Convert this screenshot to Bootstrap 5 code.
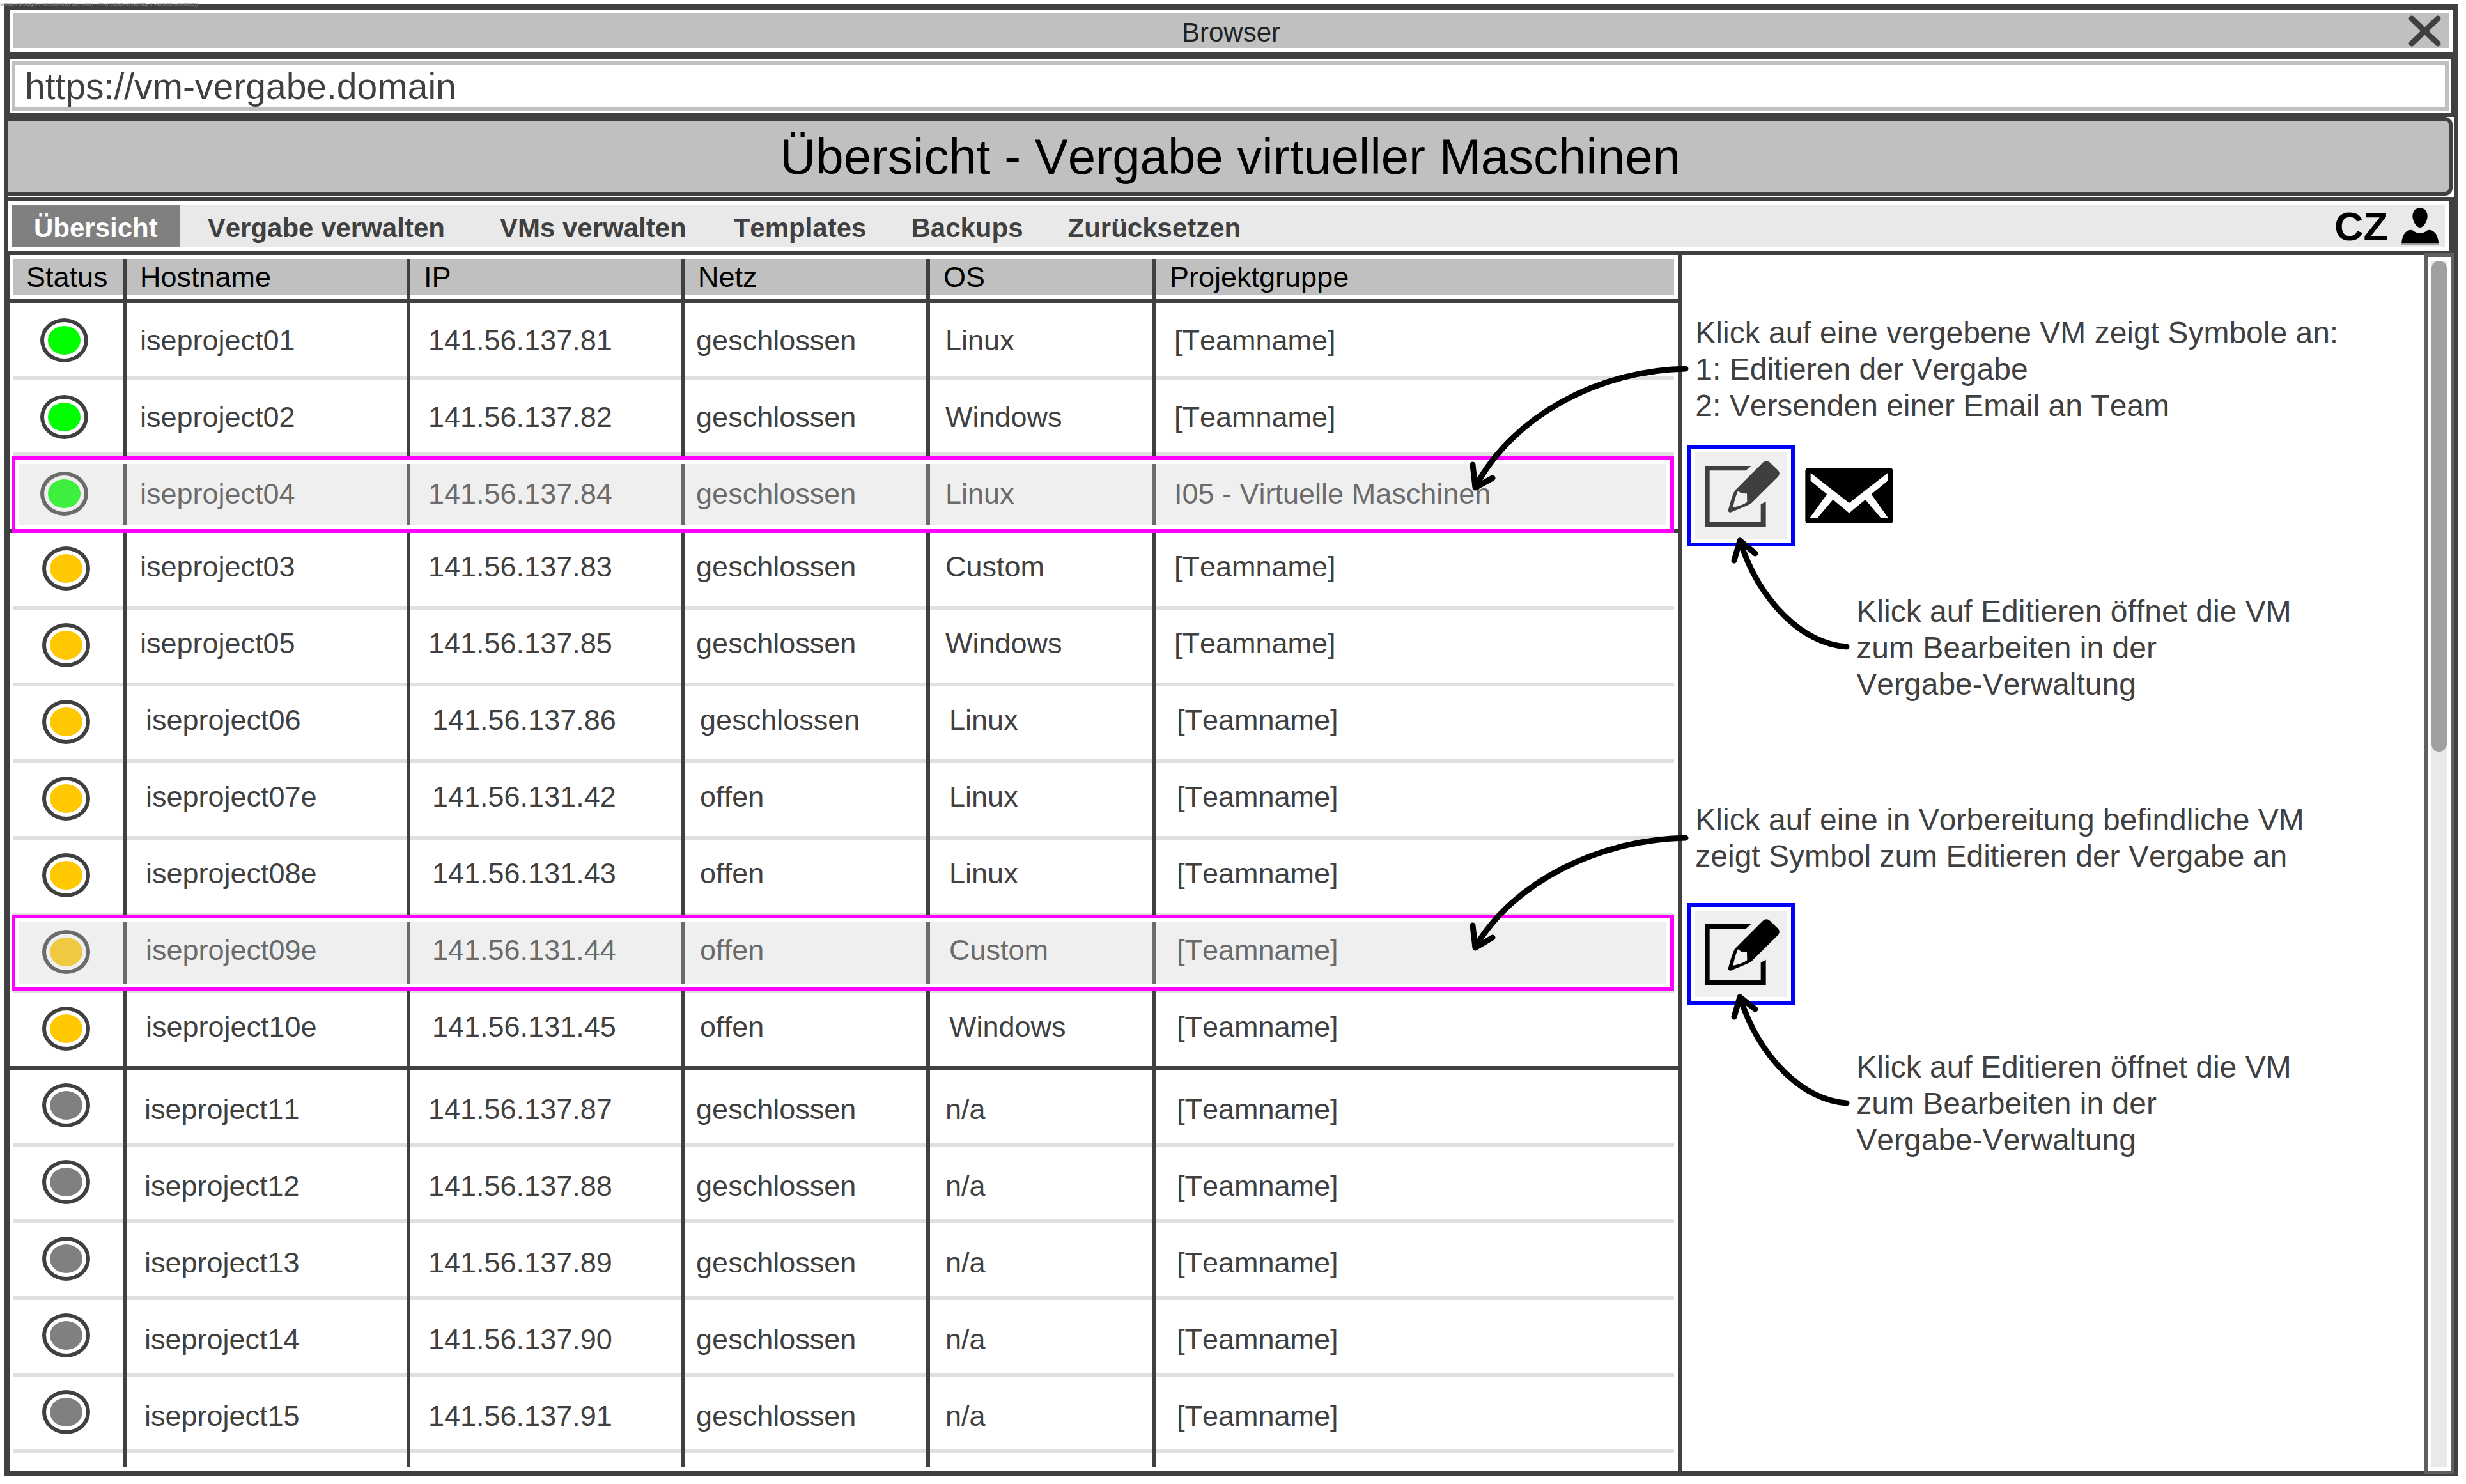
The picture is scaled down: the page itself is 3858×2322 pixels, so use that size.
<!DOCTYPE html>
<html lang="de">
<head>
<meta charset="utf-8">
<meta name="viewport" content="width=device-width, initial-scale=1">
<title>Übersicht - Vergabe virtueller Maschinen</title>
<link href="https://cdn.jsdelivr.net/npm/bootstrap@5.3.0/dist/css/bootstrap.min.css" rel="stylesheet">
<style>
:root { --ink: #404040; --bar: #c0c0c0; --pale: #e9e9e9; --line: #dfdfdf; }
body { font-family: "Liberation Sans", Arial, sans-serif; font-kerning: none; font-size: 45px; line-height: 54px; color: var(--ink); background: #fff; padding: 6px 12px 12px 6px; }
.watermark { position: absolute; left: 0; top: 2px; font-size: 8px; line-height: 10px; color: #858585; white-space: nowrap; }
.window { border: 6px solid var(--ink); }

/* window title */
.titlebar { border: 3px solid var(--ink); border-bottom-width: 6px; padding: 6px; }
.titlebar-inner { background: var(--bar); height: 54px; font-size: 42px; line-height: 48px; padding-top: 6px; color: #222; }
.close-btn { right: 12px; top: 0; width: 51px; height: 54px; line-height: 0; }

/* address */
.address { border: 6px solid var(--ink); border-width: 6px 6px 6px 3px; padding: 3px; }
.address .form-control { border: 6px solid var(--bar); border-radius: 0; height: 78px; padding: 0 15px; font-size: 57px; line-height: 66px; color: var(--ink); background: #fff; }

/* page header */
.masthead { background: var(--bar); border: 6px solid var(--ink); border-left-width: 0; border-radius: 0 12px 12px 0; margin-right: 3px; margin-bottom: 3px; padding-left: 6px; height: 123px; }
.masthead h1 { font-size: 78px; line-height: 113px; color: #000; margin: 0; }

/* navigation */
.topnav { border: 6px solid var(--ink); border-width: 6px 9px 6px 0; padding: 6px; }
.topnav-inner { background: var(--pale); height: 66px; padding-right: 9px; }
.topnav .nav-link { font-size: 42px; line-height: 61px; padding: 5px 35px 0; font-weight: bold; color: var(--ink); border-radius: 0; }
.topnav .nav-link.active { background: #808080; color: #fff; }
.user-btn { font-size: 63px; line-height: 66px; font-weight: bold; color: #000; gap: 20px; }

/* content */
.content { border: 3px solid var(--ink); border-width: 0 0 3px 3px; }
.list-pane { flex: 0 0 68.4%; min-width: 0; padding-bottom: 6px; position: relative; border-right: 6px solid var(--ink); }
.notes-pane { flex: 1 1 0; min-width: 0; padding: 93px 0 0 21px; position: relative; font-size: 48px; line-height: 57px; }

.vm-table { width: 100%; table-layout: fixed; border-collapse: separate; border-spacing: 0; }
.vm-table th { height: 75px; padding: 8px 0 13px 27px; font-weight: normal; color: #000; vertical-align: top;
  background:
    linear-gradient(var(--ink), var(--ink)) 0 100% / 100% 6px no-repeat,
    linear-gradient(var(--ink), var(--ink)) 0 6px / 6px 100% no-repeat,
    linear-gradient(var(--bar), var(--bar)) 0 6px / 100% 57px no-repeat; }
.vm-table th:first-child { padding-left: 26px;
  background:
    linear-gradient(var(--ink), var(--ink)) 0 100% / 100% 6px no-repeat,
    linear-gradient(var(--bar), var(--bar)) 6px 6px / 100% 57px no-repeat; }
.vm-table th:last-child {
  background:
    linear-gradient(var(--ink), var(--ink)) 0 100% / 100% 6px no-repeat,
    linear-gradient(var(--ink), var(--ink)) 0 6px / 6px 100% no-repeat,
    linear-gradient(90deg, var(--bar) calc(100% - 6px), #fff 0) 0 6px / 100% 57px no-repeat; }
.vm-table td { height: 120px; padding: 32px 0 0 21px; vertical-align: top; white-space: nowrap; border-left: 6px solid var(--ink);
  background: linear-gradient(var(--line), var(--line)) 0 100% / 100% 6px no-repeat; }
.vm-table td:first-child { border-left: 0; padding: 24px 0 0 48px; background-position: 6px 100%; }
.vm-table td:last-child { background: linear-gradient(90deg, var(--line) calc(100% - 6px), #fff 0) 0 100% / 100% 6px no-repeat; }
.vm-table td:nth-child(3) { padding-left: 28px; }
.vm-table td:nth-child(4) { padding-left: 18px; }
.vm-table td:nth-child(5) { padding-left: 24px; }
.vm-table td:nth-child(6) { padding-left: 28px; }
.vm-table .tier-end td, .vm-table .tier-end td:first-child, .vm-table .tier-end td:last-child { background: linear-gradient(var(--ink), var(--ink)) 0 100% / 100% 6px no-repeat; }

.vm-table .compact td { padding-top: 26px; }
.vm-table .pending td { padding-top: 26px; padding-left: 30px; }
.vm-table .pending td:nth-child(3) { padding-left: 34px; }
.vm-table .pending td:nth-child(4) { padding-left: 24px; }
.vm-table .pending td:nth-child(5) { padding-left: 30px; }
.vm-table .pending td:nth-child(6) { padding-left: 32px; }
.vm-table .unused td { padding-top: 35px; }
.vm-table .unused td:nth-child(2) { padding-left: 28px; }
.vm-table .unused td:nth-child(6) { padding-left: 32px; }
.vm-table .compact td:first-child, .vm-table .pending td:first-child, .vm-table .unused td:first-child { padding: 21px 0 0 51px; }
.vm-table .tail td, .vm-table .tail td:first-child { height: 21px; padding: 0; background: none; }

.state { display: block; width: 75px; height: 69px; border: 6px solid var(--ink); padding: 6px; border-radius: 50%; background-clip: content-box; }
.state-on { background-color: #00ff00; }
.state-prep { background-color: #ffc800; }
.state-off { background-color: #808080; }

/* selected row: veil with frame */
.picked { position: relative; }
.picked td:first-child::after { content: ""; position: absolute; left: 3px; right: 6px; top: 0; bottom: 0; border: 6px solid #f0f; padding: 6px; box-shadow: inset 0 0 0 6px #fff; background: rgba(203, 203, 203, .31) content-box; }
.pending .picked td:first-child::after { top: -3px; bottom: 3px; }

/* notes */
.note-sub { margin-left: 252px; }
.action { width: 168px; height: 159px; border: 6px solid #00f; border-radius: 0; padding: 6px; background: #efefef content-box; color: #000; line-height: 0; margin-left: -12px; }
.action.muted { color: #3f3f3f; }
.action svg { width: 144px; height: 135px; }
.mail-btn { margin-left: 16px; line-height: 0; }
.gap-a { margin-top: 33px; }
.gap-b { margin-top: 73px; }
.gap-c { margin-top: 155px; }
.gap-d { margin-top: 45px; }
.gap-e { margin-top: 69px; }
.arrows { position: absolute; left: -331px; top: 0; width: 600px; height: 1400px; pointer-events: none; fill: none; stroke: #000; stroke-width: 9px; stroke-linecap: round; stroke-linejoin: round; }

/* scrollbar */
.scroll-rail { flex: 0 0 48px; position: relative; border: 6px solid #606060; padding: 6px; background: var(--pale) content-box; margin: -3px 0 -6px; box-shadow: inset 0 0 0 6px #fff; }
.scroll-thumb { height: 40.7%; background: #a0a0a0; border-radius: 12px; }
</style>
</head>
<body>
<svg class="d-none">
  <symbol id="icon-edit" viewBox="36 54 432 405">
    <path d="M298 117H81V403H368V284L344 298V381H104V139H274Z" fill="currentColor"/>
    <path d="M225 230L354 101Q371 87 387 101L426 139Q437 153 426 167L298 294Q285 302 203 335Q189 336 192 322Q212 245 225 230Z" fill="currentColor"/>
    <path d="M237 235L253 246L279 247L280 286Q262 302 214 312Q222 268 237 235Z" fill="#efefef"/>
  </symbol>
</svg>
<div class="window">
  <div class="titlebar">
    <div class="titlebar-inner position-relative text-center">Browser
      <button type="button" class="btn close-btn border-0 p-0 position-absolute" aria-label="Schließen">
        <svg width="51" height="54" viewBox="0 0 51 54" stroke="#404040" stroke-width="9" stroke-linecap="round"><path d="M5 8L46 47M46 8L5 47"/></svg>
      </button>
    </div>
  </div>
  <form class="address m-0">
    <input class="form-control" type="text" aria-label="Adresse" value="https://vm-vergabe.domain">
  </form>
  <header class="masthead text-center"><h1>Übersicht - Vergabe virtueller Maschinen</h1></header>
  <nav class="topnav">
    <div class="topnav-inner d-flex justify-content-between">
      <ul class="nav nav-pills flex-nowrap">
        <li class="nav-item me-2"><a class="nav-link active" aria-current="page" href="#">Übersicht</a></li>
        <li class="nav-item me-3"><a class="nav-link" href="#">Vergabe verwalten</a></li>
        <li class="nav-item me-1"><a class="nav-link" href="#">VMs verwalten</a></li>
        <li class="nav-item"><a class="nav-link" href="#">Templates</a></li>
        <li class="nav-item"><a class="nav-link" href="#">Backups</a></li>
        <li class="nav-item"><a class="nav-link" href="#">Zurücksetzen</a></li>
      </ul>
      <button type="button" class="btn user-btn border-0 p-0 d-flex align-items-center">CZ
        <svg width="60" height="60" viewBox="348 42 180 180" aria-hidden="true">
          <path d="M438 46C458 46 473 62 473 85C473 105 458 138 438 138C418 138 403 105 403 85C403 62 418 46 438 46Z"/>
          <path d="M351 213Q357 150 396 149Q405 149 411 157Q438 173 465 157Q471 149 480 149Q519 150 526 213Z"/>
          <path d="M348 213H528V222H348Z" fill="#999"/>
        </svg>
      </button>
    </div>
  </nav>
  <main class="content d-flex">
    <section class="list-pane">
      <table class="vm-table">
        <colgroup><col style="width:6.78%"><col style="width:17.01%"><col style="width:16.44%"><col style="width:14.71%"><col style="width:13.56%"><col></colgroup>
        <thead><tr><th scope="col">Status</th><th scope="col">Hostname</th><th scope="col">IP</th><th scope="col">Netz</th><th scope="col">OS</th><th scope="col">Projektgruppe</th></tr></thead>
        <tbody>
          <tr><td><span class="state state-on"></span></td><td>iseproject01</td><td>141.56.137.81</td><td>geschlossen</td><td>Linux</td><td>[Teamname]</td></tr>
          <tr><td><span class="state state-on"></span></td><td>iseproject02</td><td>141.56.137.82</td><td>geschlossen</td><td>Windows</td><td>[Teamname]</td></tr>
          <tr class="picked tier-end"><td><span class="state state-on"></span></td><td>iseproject04</td><td>141.56.137.84</td><td>geschlossen</td><td>Linux</td><td>I05 - Virtuelle Maschinen</td></tr>
        </tbody>
        <tbody class="compact">
          <tr><td><span class="state state-prep"></span></td><td>iseproject03</td><td>141.56.137.83</td><td>geschlossen</td><td>Custom</td><td>[Teamname]</td></tr>
          <tr><td><span class="state state-prep"></span></td><td>iseproject05</td><td>141.56.137.85</td><td>geschlossen</td><td>Windows</td><td>[Teamname]</td></tr>
        </tbody>
        <tbody class="pending">
          <tr><td><span class="state state-prep"></span></td><td>iseproject06</td><td>141.56.137.86</td><td>geschlossen</td><td>Linux</td><td>[Teamname]</td></tr>
          <tr><td><span class="state state-prep"></span></td><td>iseproject07e</td><td>141.56.131.42</td><td>offen</td><td>Linux</td><td>[Teamname]</td></tr>
          <tr><td><span class="state state-prep"></span></td><td>iseproject08e</td><td>141.56.131.43</td><td>offen</td><td>Linux</td><td>[Teamname]</td></tr>
          <tr class="picked"><td><span class="state state-prep"></span></td><td>iseproject09e</td><td>141.56.131.44</td><td>offen</td><td>Custom</td><td>[Teamname]</td></tr>
          <tr class="tier-end"><td><span class="state state-prep"></span></td><td>iseproject10e</td><td>141.56.131.45</td><td>offen</td><td>Windows</td><td>[Teamname]</td></tr>
        </tbody>
        <tbody class="unused">
          <tr><td><span class="state state-off"></span></td><td>iseproject11</td><td>141.56.137.87</td><td>geschlossen</td><td>n/a</td><td>[Teamname]</td></tr>
          <tr><td><span class="state state-off"></span></td><td>iseproject12</td><td>141.56.137.88</td><td>geschlossen</td><td>n/a</td><td>[Teamname]</td></tr>
          <tr><td><span class="state state-off"></span></td><td>iseproject13</td><td>141.56.137.89</td><td>geschlossen</td><td>n/a</td><td>[Teamname]</td></tr>
          <tr><td><span class="state state-off"></span></td><td>iseproject14</td><td>141.56.137.90</td><td>geschlossen</td><td>n/a</td><td>[Teamname]</td></tr>
          <tr><td><span class="state state-off"></span></td><td>iseproject15</td><td>141.56.137.91</td><td>geschlossen</td><td>n/a</td><td>[Teamname]</td></tr>
          <tr class="tail"><td></td><td></td><td></td><td></td><td></td><td></td></tr>
        </tbody>
      </table>
    </section>
    <aside class="notes-pane">
      <p class="m-0">Klick auf eine vergebene VM zeigt Symbole an:<br>1: Editieren der Vergabe<br>2: Versenden einer Email an Team</p>
      <div class="d-flex align-items-center gap-a">
        <button type="button" class="btn action muted" aria-label="Editieren"><svg><use href="#icon-edit"/></svg></button>
        <button type="button" class="btn mail-btn border-0 p-0" aria-label="Email senden">
          <svg width="138" height="87" viewBox="549 119 414 261">
            <rect x="550" y="120" width="412" height="260" rx="14" fill="#000"/>
            <path d="M575 143L756 284L937 143V180L860 243L940 356H906L832 268L756 331L680 268L606 356H570L652 243L575 180Z" fill="#fff"/>
          </svg>
        </button>
      </div>
      <p class="note-sub mb-0 gap-b">Klick auf Editieren öffnet die VM<br>zum Bearbeiten in der<br>Vergabe-Verwaltung</p>
      <p class="mb-0 gap-c">Klick auf eine in Vorbereitung befindliche VM<br>zeigt Symbol zum Editieren der Vergabe an</p>
      <div class="d-flex gap-d">
        <button type="button" class="btn action" aria-label="Editieren"><svg><use href="#icon-edit"/></svg></button>
      </div>
      <p class="note-sub mb-0 gap-e">Klick auf Editieren öffnet die VM<br>zum Bearbeiten in der<br>Vergabe-Verwaltung</p>
      <svg class="arrows" viewBox="2300 399 600 1400" aria-hidden="true">
        <path d="M2637 577C2500 580 2368 650 2308 762M2304 727L2308 763L2335 748"/>
        <path d="M2637 1311C2500 1314 2368 1380 2308 1482M2304 1448L2308 1483L2335 1467"/>
        <path d="M2889 1012C2820 1008 2752 940 2722 846M2713 877L2722 846L2746 866"/>
        <path d="M2889 1726C2820 1722 2752 1654 2722 1560M2713 1591L2722 1560L2746 1579"/>
      </svg>
    </aside>
    <div class="scroll-rail"><div class="scroll-thumb"></div></div>
  </main>
</div>
<div class="watermark">Visual Paradigm Professional(Paul Kiok(HTW Dresden University of Applied Sciences))</div>
<script src="https://cdn.jsdelivr.net/npm/bootstrap@5.3.0/dist/js/bootstrap.bundle.min.js"></script>
</body>
</html>
